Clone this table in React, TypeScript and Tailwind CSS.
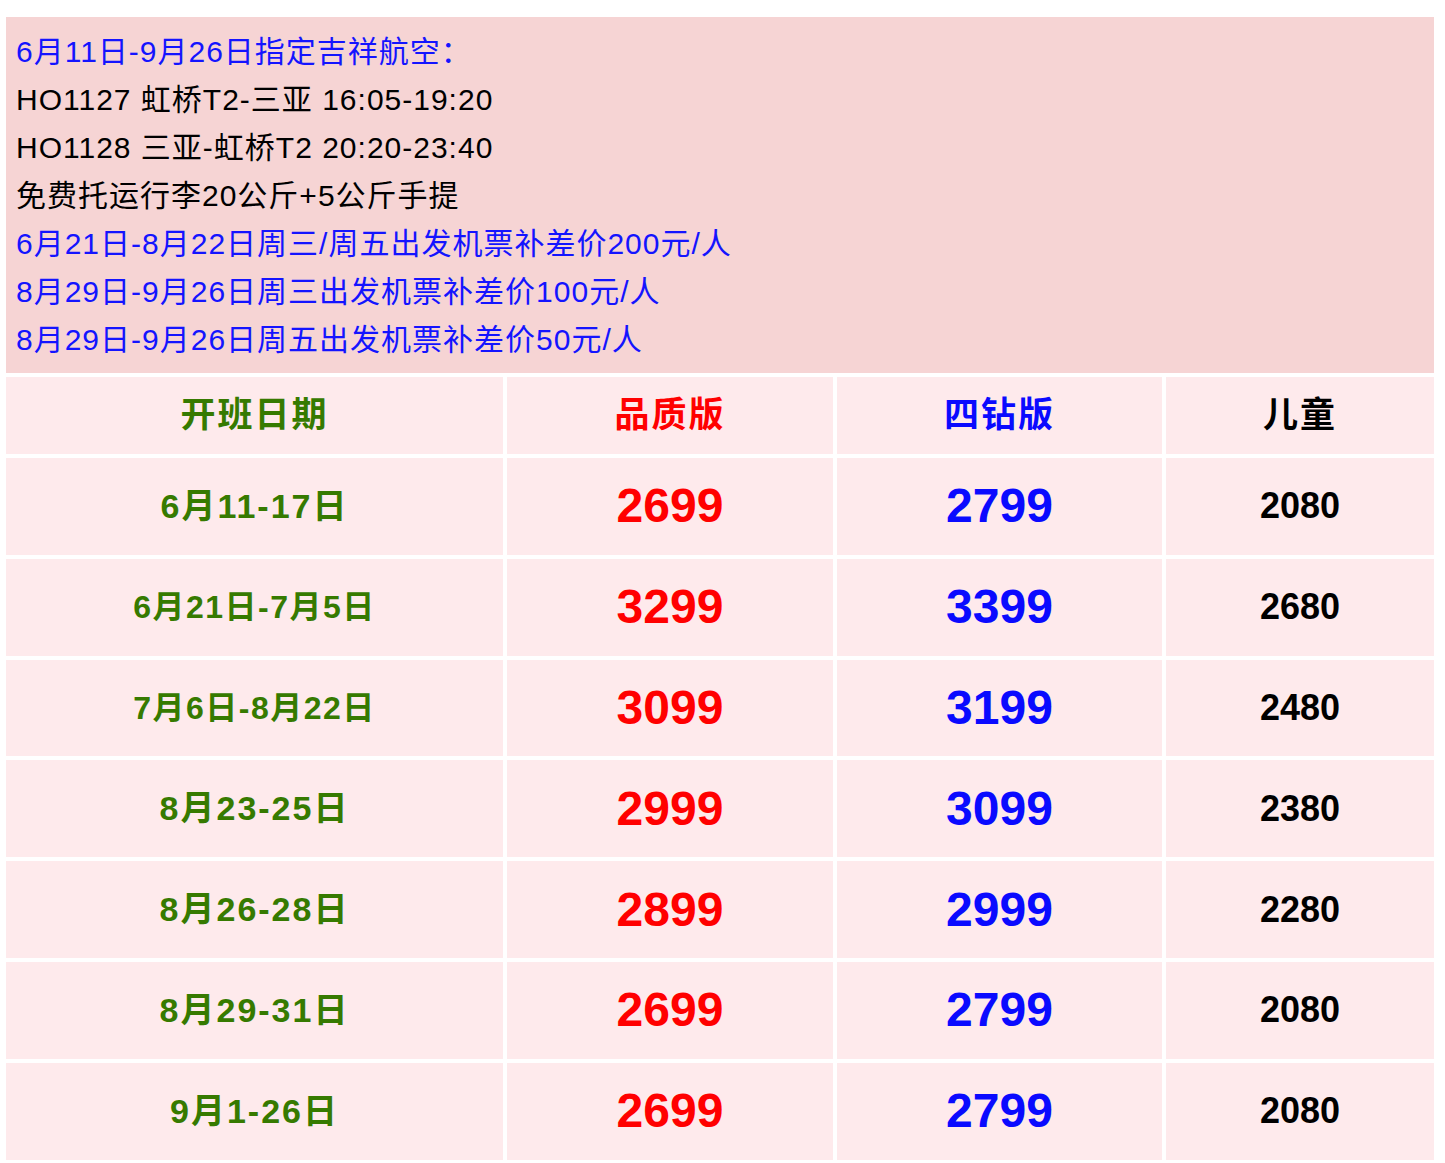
import React from "react";

const font = { fontFamily: '"Liberation Sans", Arial, "Noto Sans CJK SC", sans-serif' };

const rows = [
  { d: "6月11-17日", small: false, a: "2699", b: "2799", c: "2080" },
  { d: "6月21日-7月5日", small: true, a: "3299", b: "3399", c: "2680" },
  { d: "7月6日-8月22日", small: true, a: "3099", b: "3199", c: "2480" },
  { d: "8月23-25日", small: false, a: "2999", b: "3099", c: "2380" },
  { d: "8月26-28日", small: false, a: "2899", b: "2999", c: "2280" },
  { d: "8月29-31日", small: false, a: "2699", b: "2799", c: "2080" },
  { d: "9月1-26日", small: false, a: "2699", b: "2799", c: "2080" },
];

export default function App() {
  return (
    <div className="min-h-[1163px] bg-white pt-[17px] pl-[6px]" style={font}>
      <div className="w-[1428px]">
        <div className="bg-[#f6d4d4] pt-[11px] pb-[9px] pl-[10px] text-[30px] leading-[48px] tracking-[1px]">
          <div className="text-[#1414ff]">6月11日-9月26日指定吉祥航空：</div>
          <div className="text-black">HO1127 虹桥T2-三亚 16:05-19:20</div>
          <div className="text-black">HO1128 三亚-虹桥T2 20:20-23:40</div>
          <div className="text-black">免费托运行李20公斤+5公斤手提</div>
          <div className="text-[#1414ff]">6月21日-8月22日周三/周五出发机票补差价200元/人</div>
          <div className="text-[#1414ff]">8月29日-9月26日周三出发机票补差价100元/人</div>
          <div className="text-[#1414ff]">8月29日-9月26日周五出发机票补差价50元/人</div>
        </div>
        <div className="mt-[4px] grid grid-cols-[497px_326px_325px_268px] gap-[4px] font-bold">
          <div className="flex h-[77px] items-center justify-center bg-[#feeaec] text-[35px] tracking-[2px] text-[#367a00]">开班日期</div>
          <div className="flex h-[77px] items-center justify-center bg-[#feeaec] text-[35px] tracking-[2px] text-[#ff0000]">品质版</div>
          <div className="flex h-[77px] items-center justify-center bg-[#feeaec] text-[35px] tracking-[2px] text-[#0a0aff]">四钻版</div>
          <div className="flex h-[77px] items-center justify-center bg-[#feeaec] text-[35px] tracking-[2px] text-black">儿童</div>
          {rows.map((r, i) => (
            <React.Fragment key={i}>
              <div
                className={
                  r.small
                    ? "flex h-[96.8px] items-center justify-center bg-[#feeaec] text-[32px] tracking-[1.5px] text-[#367a00]"
                    : "flex h-[96.8px] items-center justify-center bg-[#feeaec] text-[34px] tracking-[2px] text-[#367a00]"
                }
              >
                {r.d}
              </div>
              <div className="flex h-[96.8px] items-center justify-center bg-[#feeaec] text-[48px] text-[#ff0000]">{r.a}</div>
              <div className="flex h-[96.8px] items-center justify-center bg-[#feeaec] text-[48px] text-[#0a0aff]">{r.b}</div>
              <div className="flex h-[96.8px] items-center justify-center bg-[#feeaec] text-[36px] text-black">{r.c}</div>
            </React.Fragment>
          ))}
        </div>
      </div>
    </div>
  );
}
